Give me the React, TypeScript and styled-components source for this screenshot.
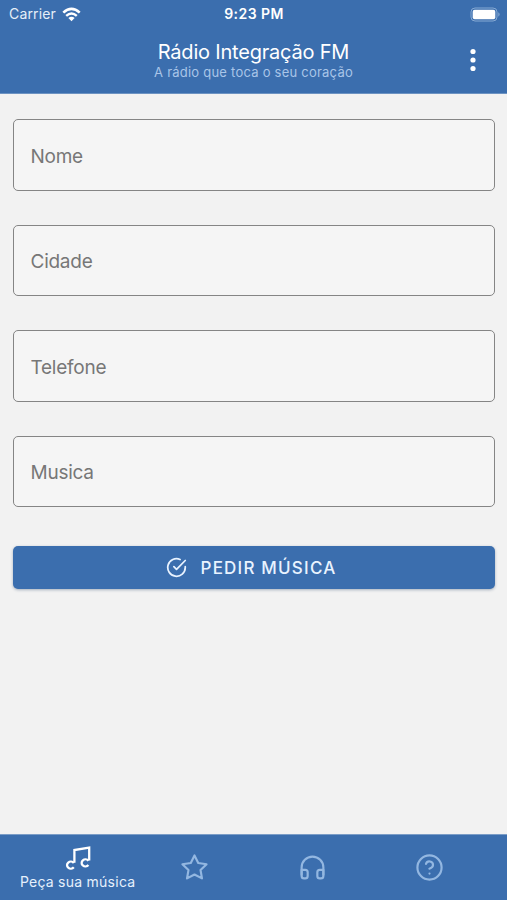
import React from "react";
import styled, { createGlobalStyle } from "styled-components";

const GlobalStyle = createGlobalStyle`
  * { box-sizing: border-box; }
  body { margin: 0; background: #f2f2f2; font-family: Inter, sans-serif; }
`;

const Screen = styled.div`
  width: 507px;
  height: 900px;
  display: flex;
  flex-direction: column;
  background: #f2f2f2;
  overflow: hidden;
`;

const Header = styled.header`
  height: 94px;
  flex: none;
  background: #3b6eae;
  color: #fff;
  border-bottom: 1px solid #6d93c2;
`;

const StatusBar = styled.div`
  height: 27px;
  display: grid;
  grid-template-columns: 1fr auto 1fr;
  align-items: center;
  padding: 0 6px 0 9px;
`;

const Carrier = styled.div`
  display: flex;
  align-items: center;
  gap: 6px;
  font-size: 14px;
  line-height: 26px;
  letter-spacing: 0.15px;
  color: #e6eef8;
`;

const Clock = styled.div`
  font-size: 14px;
  font-weight: 600;
  line-height: 28px;
  letter-spacing: 0.45px;
  margin-right: 2px;
`;

const Battery = styled.svg`
  justify-self: end;
`;

const AppBar = styled.div`
  height: 66px;
  display: grid;
  grid-template-columns: 70px 1fr 70px;
  align-items: center;
`;

const Titles = styled.div`
  grid-column: 2;
  text-align: center;
  white-space: nowrap;
`;

const Title = styled.h1`
  margin: 0;
  font-size: 20px;
  font-weight: 400;
  line-height: 24px;
  letter-spacing: -0.2px;
`;

const Subtitle = styled.p`
  margin: 0;
  font-size: 13px;
  line-height: 16px;
  letter-spacing: 0.23px;
  color: #a9c5e8;
`;

const MenuButton = styled.button`
  border: 0;
  padding: 0 0 0 2px;
  background: none;
  display: flex;
  justify-content: center;
  color: #fff;
`;

const Form = styled.main`
  flex: 1;
  padding: 25px 12px 0 13px;
  display: flex;
  flex-direction: column;
  gap: 34px;
`;

const Field = styled.input`
  display: block;
  width: 100%;
  height: 71.5px;
  flex: none;
  padding: 3px 16px 0 16.5px;
  border: 1.5px solid #858585;
  border-radius: 5px;
  background: #f5f5f5;
  outline: 0;
  font: 400 19px Inter, sans-serif;
  letter-spacing: -0.25px;
  &::placeholder { color: #777; opacity: 1; }
`;

const Submit = styled.button`
  width: 100%;
  height: 43px;
  flex: none;
  margin-top: 5px;
  padding: 0 6px 0 0;
  border: 0;
  border-radius: 5px;
  background: #3b6eae;
  box-shadow: 0 1px 3px rgba(20, 50, 90, 0.35);
  color: #e9f3ff;
  display: flex;
  align-items: center;
  justify-content: center;
  gap: 14px;
  font: 500 17px Inter, sans-serif;
  letter-spacing: 1.2px;
`;

const TabBar = styled.nav`
  height: 66px;
  flex: none;
  padding: 0 19px;
  display: grid;
  grid-template-columns: repeat(4, 1fr);
  background: #3b6eae;
  border-top: 1px solid #7b9dc7;
`;

const Tab = styled.button<{ $active?: boolean }>`
  border: 0;
  padding: 0;
  background: none;
  display: flex;
  flex-direction: column;
  align-items: center;
  justify-content: center;
  color: ${(p) => (p.$active ? "#fff" : "#93b7e1")};
`;

const TabLabel = styled.span`
  margin-top: 1px;
  font: 400 14px/18px Inter, sans-serif;
  letter-spacing: 0.25px;
  white-space: nowrap;
  color: #e6f0fc;
`;

const Stroke = styled.svg`
  display: block;
  fill: none;
  stroke: currentColor;
  stroke-width: 2;
  stroke-linecap: round;
  stroke-linejoin: round;
`;

const TabIcon = styled(Stroke)`
  stroke-width: 1.8;
`;

const NoteStroke = styled(Stroke)`
  stroke-width: 2.3;
  stroke-linecap: butt;
  stroke-linejoin: miter;
`;

const fields = ["Nome", "Cidade", "Telefone", "Musica"];

export default function App() {
  return (
    <Screen>
      <GlobalStyle />
      <Header>
        <StatusBar>
          <Carrier>
            Carrier
            <svg width="19" height="15" viewBox="0 0 19 15">
              <path d="M1.3 5.6Q9.5-2 17.7 5.6" fill="none" stroke="#fff" strokeWidth="2.6" />
              <path d="M4.2 8.8Q9.5 4 14.8 8.8" fill="none" stroke="#fff" strokeWidth="2.4" />
              <path d="M6.4 11.1Q9.5 8.6 12.6 11.1L9.5 14.2Z" fill="#fff" />
            </svg>
          </Carrier>
          <Clock>9:23 PM</Clock>
          <Battery width="31" height="15" viewBox="0 0 31 15">
            <rect x="1" y="1" width="26" height="13" rx="4" fill="none" stroke="#86a9d3" />
            <rect x="2.7" y="2.8" width="22.6" height="9.4" rx="2" fill="#fff" />
            <path d="M28.3 5.3Q31 7.5 28.3 9.7Z" fill="#86a9d3" />
          </Battery>
        </StatusBar>
        <AppBar>
          <Titles>
            <Title>Rádio Integração FM</Title>
            <Subtitle>A rádio que toca o seu coração</Subtitle>
          </Titles>
          <MenuButton aria-label="Menu">
            <svg width="6" height="24" viewBox="0 0 6 24" fill="currentColor">
              <circle cx="3" cy="3.5" r="2.6" />
              <circle cx="3" cy="12" r="2.6" />
              <circle cx="3" cy="20.5" r="2.6" />
            </svg>
          </MenuButton>
        </AppBar>
      </Header>
      <Form>
        {fields.map((name) => (
          <Field key={name} placeholder={name} aria-label={name} />
        ))}
        <Submit>
          <Stroke width="21" height="21" viewBox="0 0 24 24">
            <path d="M22 11.08V12a10 10 0 1 1-5.93-9.14" />
            <path d="M22 4 12 14.01l-3-3" />
          </Stroke>
          PEDIR MÚSICA
        </Submit>
      </Form>
      <TabBar>
        <Tab $active>
          <NoteStroke width="28" height="28" viewBox="0 0 28 28">
            <path d="M10.4 18.8V6L25.2 3.7V16.6" />
            <path d="M9.8 18.9A3.8 3.5 0 1 0 9.8 23.3M24.4 16.7A3.8 3.5 0 1 0 24.4 21.1" />
          </NoteStroke>
          <TabLabel>Peça sua música</TabLabel>
        </Tab>
        <Tab aria-label="Favoritos">
          <TabIcon width="29" height="29" viewBox="0 0 24 24">
            <path d="m12 2 3.09 6.26L22 9.27l-5 4.87 1.18 6.88L12 17.77l-6.18 3.25L7 14.14 2 9.27l6.91-1.01Z" />
          </TabIcon>
        </Tab>
        <Tab aria-label="Ouvir">
          <TabIcon width="29" height="29" viewBox="0 0 24 24">
            <path d="M3 18v-6a9 9 0 0 1 18 0v6" />
            <path d="M21 19a2 2 0 0 1-2 2h-1a2 2 0 0 1-2-2v-3a2 2 0 0 1 2-2h3zM3 19a2 2 0 0 0 2 2h1a2 2 0 0 0 2-2v-3a2 2 0 0 0-2-2H3z" />
          </TabIcon>
        </Tab>
        <Tab aria-label="Ajuda">
          <TabIcon width="29" height="29" viewBox="0 0 24 24">
            <circle cx="12" cy="12" r="10" />
            <path d="M9.09 9a3 3 0 0 1 5.83 1c0 2-3 3-3 3M12 17h.01" />
          </TabIcon>
        </Tab>
      </TabBar>
    </Screen>
  );
}
